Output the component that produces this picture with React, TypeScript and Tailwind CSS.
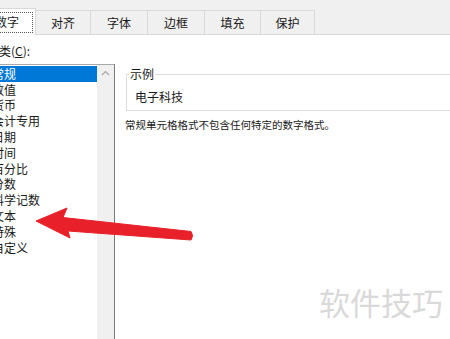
import React from "react";

const tabs = ["对齐", "字体", "边框", "填充", "保护"];
const tabWidths = [55, 57, 57, 56, 54];
const items = ["常规", "数值", "货币", "会计专用", "日期", "时间", "百分比", "分数", "科学记数", "文本", "特殊", "自定义"];

export default function App() {
  return (
    <div
      className="relative w-[450px] h-[339px] overflow-hidden bg-white text-[#1a1a1a]"
      style={{ fontFamily: '"Noto Sans CJK SC", "Noto Sans", sans-serif' }}
    >
      {/* tab strip */}
      <div className="flex items-end h-[35px] bg-[#f0f0f0] border-b border-[#d9d9d9]">
        <div className="relative -mb-px h-[27px] w-[36px] bg-white border-r border-t border-[#d9d9d9] flex items-center">
          <div className="ml-0 h-[21px] w-[33px] border border-dotted border-[#555] border-l-0 flex items-center">
            <span className="-ml-[5px] text-[12px] leading-[14px]">数字</span>
          </div>
        </div>
        {tabs.map((t, i) => (
          <div
            key={t}
            className="h-[24px] bg-[#f0f0f0] border-r border-t border-[#d9d9d9] flex items-center justify-center text-[12px] leading-[14px]"
            style={{ width: tabWidths[i] }}
          >
            {t}
          </div>
        ))}
      </div>

      {/* body */}
      <div className="flex">
        <div className="w-[115px] shrink-0">
          <div className="h-[29px] pt-[9px] text-[12px] leading-[14px]">
            <span className="-ml-[1px]">
              类(<span className="underline">C</span>):
            </span>
          </div>
          <div className="flex h-[280px] border-t border-r border-t-[#a8a8a8] border-r-[#7a7a7a]">
            <div className="w-[97px] pt-[1px]">
              {items.map((it, i) => (
                <div
                  key={it}
                  className={
                    "h-[15.8px] flex items-center text-[12px] leading-[14px] whitespace-nowrap " +
                    (i === 0 ? "bg-[#0078d7] text-white" : "")
                  }
                >
                  <span className="-ml-[8px]">{it}</span>
                </div>
              ))}
            </div>
            <div className="w-[17px] bg-[#f0f0f0] flex justify-center pt-[5px]">
              <svg width="9" height="6" viewBox="0 0 9 6">
                <path d="M1 5 L4.5 1.5 L8 5" fill="none" stroke="#a6a6a6" strokeWidth="1.2" />
              </svg>
            </div>
          </div>
        </div>

        <div className="flex-1">
          <div className="relative ml-[11px] -mr-[10px] mt-[39px] h-[37px] border border-[#dcdcdc]">
            <div className="absolute -top-[8px] left-[2px] bg-white px-[1px] text-[12px] leading-[14px]">示例</div>
            <div className="pt-[15px] pl-[8px] text-[12px] leading-[14px]">电子科技</div>
          </div>
          <div className="mt-[7px] ml-[10px] text-[10.5px] leading-[14px] whitespace-nowrap">
            常规单元格格式不包含任何特定的数字格式。
          </div>
        </div>
      </div>

      {/* red arrow annotation */}
      <svg className="absolute left-0 top-0 pointer-events-none" width="450" height="339" viewBox="0 0 450 339">
        <path
          d="M36 221 L67 208 L63 217.5 L191 231.5 Q194 235.5 191 240 L68 231 L70 238 Z"
          fill="#e8202a"
          stroke="#e8202a"
          strokeWidth="1"
          strokeLinejoin="round"
        />
      </svg>

      {/* watermark */}
      <div className="absolute left-[319px] top-[284px] text-[31px] leading-[36px] text-[#d9d9d9] whitespace-nowrap">
        软件技巧
      </div>
    </div>
  );
}
